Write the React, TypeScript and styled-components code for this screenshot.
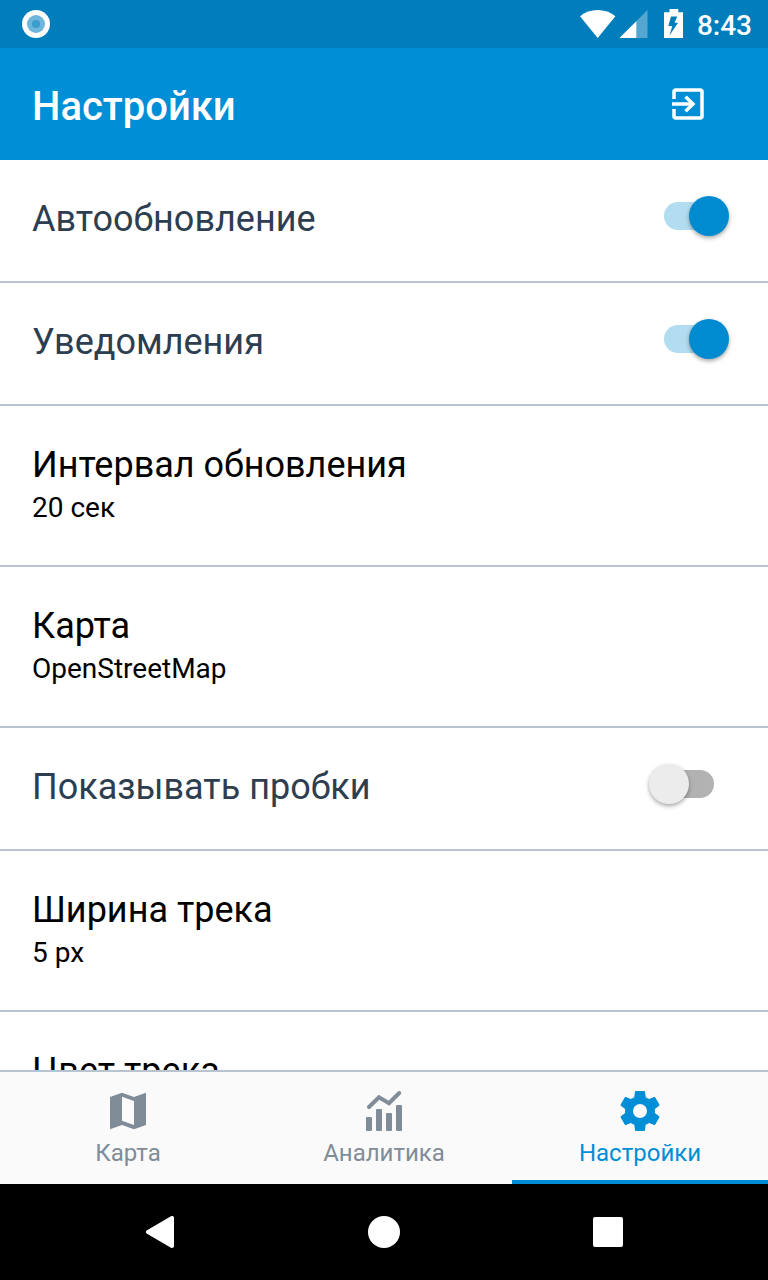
import React, { useState } from "react";
import styled, { createGlobalStyle } from "styled-components";

const GlobalStyle = createGlobalStyle`
  *, *::before, *::after { box-sizing: border-box; }
  body {
    margin: 0;
    background: #fff;
    color: #000;
    font-family: Roboto, "Noto Sans", sans-serif;
  }
  button, input { font: inherit; color: inherit; margin: 0; }
  svg { display: block; }
`;

const Screen = styled.div`
  display: flex;
  flex-direction: column;
  height: 100vh;
`;

const StatusBar = styled.div`
  flex: none;
  display: flex;
  align-items: center;
  justify-content: space-between;
  height: 48px;
  padding: 0 16px 0 22px;
  background: #007dbb;
  color: #fff;
`;

const StatusIcons = styled.div`
  display: flex;
  align-items: center;
`;

const Clock = styled.time`
  margin-left: 13px;
  font-size: 28px;
  line-height: 32px;
  font-weight: 500;
  padding-top: 4px;
`;

const Header = styled.header`
  flex: none;
  display: flex;
  align-items: center;
  justify-content: space-between;
  height: 112px;
  padding: 0 48px 0 32px;
  background: #008ed6;
  color: #fff;
`;

const Title = styled.h1`
  margin: 0;
  padding-top: 6px;
  font-size: 40px;
  line-height: 48px;
  font-weight: 500;
`;

const IconButton = styled.button`
  display: grid;
  place-items: center;
  padding: 16px;
  border: 0;
  background: none;
  cursor: pointer;
`;

const List = styled.main`
  flex: 1;
  min-height: 0;
  overflow-y: auto;
  scrollbar-width: none;
`;

const SwitchRow = styled.label`
  display: flex;
  justify-content: space-between;
  padding: 37px 54px 40px 32px;
  border-bottom: 2px solid #b7c4cf;
  color: #2d3e50;
  cursor: pointer;
`;

const ChoiceRow = styled.button`
  display: flex;
  flex-direction: column;
  width: 100%;
  padding: 37px 32px 36px;
  border: 0;
  border-bottom: 2px solid #b7c4cf;
  background: none;
  text-align: left;
  cursor: pointer;
`;

const RowTitle = styled.span`
  font-size: 36px;
  line-height: 44px;
`;

const RowValue = styled.span`
  font-size: 28px;
  line-height: 42px;
`;

const Switch = styled.input`
  appearance: none;
  flex: none;
  width: 50px;
  height: 28px;
  margin-top: 5px;
  border-radius: 14px;
  background: #b2b2b2;
  cursor: pointer;

  &::before {
    content: "";
    display: block;
    width: 40px;
    height: 40px;
    margin: -6px 0 0 -15px;
    border-radius: 50%;
    background: #ececec;
    box-shadow: 0 2px 4px rgba(0, 0, 0, 0.35);
  }

  &:checked { background: #b2ddf1; }
  &:checked::before {
    margin-left: 25px;
    background: #008bd1;
  }
`;

const TabBar = styled.nav`
  flex: none;
  display: flex;
  border-top: 2px solid #b7c4cf;
  background: #fafafa;
`;

const Tab = styled.a<{ $active?: boolean }>`
  flex: 1;
  display: flex;
  flex-direction: column;
  align-items: center;
  gap: 4px;
  height: 112px;
  padding-top: 15px;
  border-bottom: 4px solid ${(p) => (p.$active ? "#008ed6" : "transparent")};
  color: ${(p) => (p.$active ? "#008ed6" : "#808c98")};
  font-size: 24px;
  line-height: 28px;
  text-decoration: none;
`;

const SystemBar = styled.div`
  flex: none;
  display: flex;
  justify-content: center;
  height: 96px;
  background: #000;
`;

const SystemButton = styled.button`
  display: grid;
  place-items: center;
  width: 224px;
  padding: 0;
  border: 0;
  background: none;
  cursor: pointer;
`;

const RecordIcon = () => (
  <svg width="28" height="28" viewBox="0 0 28 28" aria-hidden="true">
    <circle cx="14" cy="14" r="14" fill="#fff" />
    <circle cx="14" cy="14" r="9" fill="#6db5da" />
    <circle cx="14" cy="14" r="4" fill="#399dce" />
  </svg>
);

const SignalIcons = () => (
  <svg width="104" height="30" viewBox="0 0 104 30" fill="#fff" aria-hidden="true">
    <path d="M0 7.2C5 3.200 11 1 17.700 1S30.400 3.200 35.400 7.200L17.700 29Z" />
    <path d="M67.500 1 39.500 29H67.500Z" opacity="0.33" />
    <path d="M56.300 12.200V29H39.500Z" />
    <path
      fillRule="evenodd"
      d="M89.500 0H98.300V3.300H103V29H84V3.300H89.500ZM91 7.500 88.300 17H92.300L89.500 26.500 98 13.800H94.500L97.300 7.500Z"
    />
  </svg>
);

const ExitIcon = () => (
  <svg width="32" height="32" viewBox="0 0 32 32" fill="none" stroke="#fff" strokeWidth="3.500" aria-hidden="true">
    <path d="M2 11V4Q2 2 4 2H28Q30 2 30 4V28Q30 30 28 30H4Q2 30 2 28V21" />
    <path d="M0 16H21" />
    <path d="M13.500 8.700 21 16 13.500 23.300" />
  </svg>
);

const MapIcon = () => (
  <svg width="48" height="48" viewBox="0 0 48 48" fill="currentColor" aria-hidden="true">
    <path
      fillRule="evenodd"
      d="M6 10 18 5.700 30 10 42 5.700V38L30 42.200 18 38 6 42.200ZM18 9.700V33.700L30 38V14Z"
    />
  </svg>
);

const ChartIcon = () => (
  <svg width="48" height="48" viewBox="0 0 48 48" fill="currentColor" aria-hidden="true">
    <rect x="6" y="30" width="6" height="14" rx="1" />
    <rect x="16" y="22" width="6" height="22" rx="1" />
    <rect x="26" y="26" width="6" height="18" rx="1" />
    <rect x="36" y="18" width="6" height="26" rx="1" />
    <path
      d="M9 20 19 10.200 29 16.200 39.200 6"
      fill="none"
      stroke="currentColor"
      strokeWidth="4"
      strokeLinecap="round"
      strokeLinejoin="miter"
    />
  </svg>
);

const GearIcon = () => (
  <svg width="48" height="48" viewBox="0 0 24 24" fill="currentColor" aria-hidden="true">
    <path d="M12 15.500A3.500 3.500 0 0 1 8.500 12 3.500 3.500 0 0 1 12 8.500 3.500 3.500 0 0 1 15.500 12 3.500 3.500 0 0 1 12 15.500M19.430 12.970C19.470 12.650 19.500 12.330 19.500 12S19.470 11.340 19.430 11L21.540 9.370C21.730 9.220 21.780 8.950 21.660 8.730L19.660 5.270C19.540 5.050 19.270 4.960 19.050 5.050L16.560 6.050C16.040 5.660 15.500 5.320 14.870 5.070L14.500 2.420C14.460 2.180 14.250 2 14 2H10C9.750 2 9.540 2.180 9.500 2.420L9.130 5.070C8.500 5.320 7.960 5.660 7.440 6.050L4.950 5.050C4.730 4.960 4.460 5.050 4.340 5.270L2.340 8.730C2.210 8.950 2.270 9.220 2.460 9.370L4.570 11C4.530 11.340 4.500 11.670 4.500 12S4.530 12.650 4.570 12.970L2.460 14.630C2.270 14.780 2.210 15.050 2.340 15.270L4.340 18.730C4.460 18.950 4.730 19.030 4.950 18.950L7.440 17.940C7.960 18.340 8.500 18.680 9.130 18.930L9.500 21.580C9.540 21.820 9.750 22 10 22H14C14.250 22 14.460 21.820 14.500 21.580L14.870 18.930C15.500 18.670 16.040 18.340 16.560 17.940L19.050 18.950C19.270 19.030 19.540 18.950 19.660 18.730L21.660 15.270C21.780 15.050 21.730 14.780 21.540 14.630Z" />
  </svg>
);

const BackIcon = () => (
  <svg width="32" height="32" viewBox="0 0 32 32" fill="#fff" stroke="#fff" strokeWidth="4" strokeLinejoin="round" aria-hidden="true">
    <path d="M4 16 28 2V30Z" />
  </svg>
);

const HomeIcon = () => (
  <svg width="32" height="32" viewBox="0 0 32 32" fill="#fff" aria-hidden="true">
    <circle cx="16" cy="16" r="16" />
  </svg>
);

const RecentsIcon = () => (
  <svg width="32" height="32" viewBox="0 0 32 32" fill="#fff" aria-hidden="true">
    <rect x="1" y="1" width="30" height="30" rx="2" />
  </svg>
);

const SwitchSetting = ({ title, initial }: { title: string; initial: boolean }) => {
  const [on, setOn] = useState(initial);
  return (
    <SwitchRow>
      <RowTitle>{title}</RowTitle>
      <Switch type="checkbox" role="switch" checked={on} onChange={(e) => setOn(e.target.checked)} />
    </SwitchRow>
  );
};

const ChoiceSetting = ({ title, value }: { title: string; value?: string }) => (
  <ChoiceRow type="button">
    <RowTitle>{title}</RowTitle>
    {value && <RowValue>{value}</RowValue>}
  </ChoiceRow>
);

export default function App() {
  return (
    <Screen>
      <GlobalStyle />
      <StatusBar>
        <RecordIcon />
        <StatusIcons>
          <SignalIcons />
          <Clock>8:43</Clock>
        </StatusIcons>
      </StatusBar>
      <Header>
        <Title>Настройки</Title>
        <IconButton type="button" aria-label="Выйти">
          <ExitIcon />
        </IconButton>
      </Header>
      <List>
        <SwitchSetting title="Автообновление" initial />
        <SwitchSetting title="Уведомления" initial />
        <ChoiceSetting title="Интервал обновления" value="20 сек" />
        <ChoiceSetting title="Карта" value="OpenStreetMap" />
        <SwitchSetting title="Показывать пробки" initial={false} />
        <ChoiceSetting title="Ширина трека" value="5 px" />
        <ChoiceSetting title="Цвет трека" />
      </List>
      <TabBar>
        <Tab href="#map">
          <MapIcon />
          Карта
        </Tab>
        <Tab href="#analytics">
          <ChartIcon />
          Аналитика
        </Tab>
        <Tab href="#settings" $active aria-current="page">
          <GearIcon />
          Настройки
        </Tab>
      </TabBar>
      <SystemBar>
        <SystemButton type="button" aria-label="Назад">
          <BackIcon />
        </SystemButton>
        <SystemButton type="button" aria-label="Домой">
          <HomeIcon />
        </SystemButton>
        <SystemButton type="button" aria-label="Недавние">
          <RecentsIcon />
        </SystemButton>
      </SystemBar>
    </Screen>
  );
}
